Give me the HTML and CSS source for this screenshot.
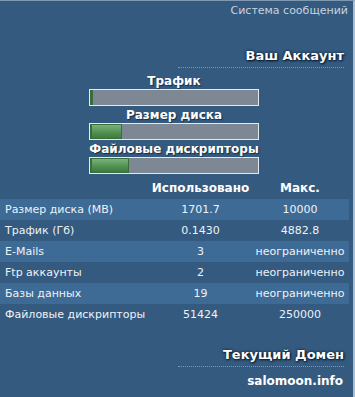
FILE: index.html
```html
<!DOCTYPE html>
<html lang="ru">
<head>
  <meta charset="UTF-8">
  <meta name="viewport" content="width=device-width, initial-scale=1.0">
  <title>Ваш Аккаунт</title>
  <link rel="stylesheet" href="styles.css">
</head>
<body>
  <div class="panel">
    <div class="topbar">
      <a href="#" class="top-link">Система сообщений</a>
    </div>

    <div class="section-title title-account">Ваш Аккаунт</div>

    <div class="meters">
      <div class="meter">
        <div class="meter-label">Трафик</div>
        <div class="bar"><div class="fill" style="width: 0px;"></div></div>
      </div>
      <div class="meter">
        <div class="meter-label">Размер диска</div>
        <div class="bar"><div class="fill" style="width: 29px;"></div></div>
      </div>
      <div class="meter">
        <div class="meter-label">Файловые дискрипторы</div>
        <div class="bar"><div class="fill" style="width: 36px;"></div></div>
      </div>
    </div>

    <table class="stats">
      <tr class="head">
        <th></th>
        <th>Использовано</th>
        <th>Макс.</th>
      </tr>
      <tr class="light">
        <td>Размер диска (MB)</td>
        <td>1701.7</td>
        <td>10000</td>
      </tr>
      <tr>
        <td>Трафик (Гб)</td>
        <td>0.1430</td>
        <td>4882.8</td>
      </tr>
      <tr class="light">
        <td>E-Mails</td>
        <td>3</td>
        <td>неограниченно</td>
      </tr>
      <tr>
        <td>Ftp аккаунты</td>
        <td>2</td>
        <td>неограниченно</td>
      </tr>
      <tr class="light">
        <td>Базы данных</td>
        <td>19</td>
        <td>неограниченно</td>
      </tr>
      <tr>
        <td>Файловые дискрипторы</td>
        <td>51424</td>
        <td>250000</td>
      </tr>
    </table>

    <div class="section-title title-domain">Текущий Домен</div>
    <div class="domain">salomoon.info</div>
  </div>
</body>
</html>
```

FILE: styles.css
```css
body {
  margin: 0;
  padding: 0;
  background-color: #345a80;
  font-family: "DejaVu Sans", Verdana, sans-serif;
  font-size: 11px;
  color: #fff;
}
.panel {
  width: 353px;
  height: 396px;
  background-color: #345a80;
  border-top: 1px solid #7f97af;
  border-right: 2px solid #aebdcc;
}
.topbar {
  text-align: right;
  padding: 3px 5px 0 0;
  height: 17px;
}
.top-link {
  color: #c9d3dd;
  text-decoration: none;
  font-size: 11px;
}
.section-title {
  width: 166px;
  margin-left: auto;
  margin-right: 9px;
  text-align: right;
  font-weight: bold;
  font-size: 13px;
  color: #fff;
  text-shadow: 1px 1px 2px #0a1828, 0 0 3px #0a1828;
  border-bottom: 1px dotted #7f97b0;
  line-height: 16px;
  padding-bottom: 3px;
}
.title-account {
  margin-top: 27px;
}
.meters {
  margin-top: 5px;
}
.meter {
  width: 170px;
  margin-left: 89px;
}
.meter-label {
  text-align: center;
  font-weight: bold;
  font-size: 12px;
  line-height: 16px;
  text-shadow: 1px 1px 1px #1a2e44;
}
.bar {
  height: 15px;
  border: 1px solid #e4e9ee;
  background-color: #7e8894;
  margin-bottom: 1px;
}
.fill {
  height: 13px;
  border: 1px solid #3b6d3b;
  border-left-width: 2px;
  background: linear-gradient(to bottom, #7bb27b, #4f8f4f 60%, #3f7a3f);
}
.stats {
  width: 349px;
  border-collapse: collapse;
  margin-top: 3px;
}
.stats th {
  font-weight: bold;
  font-size: 12px;
  height: 22px;
  text-align: center;
  padding: 0;
}
.stats td {
  height: 21px;
  padding: 0;
  text-align: center;
  color: #eef2f6;
}
.stats td:first-child {
  text-align: left;
  padding-left: 5px;
  width: 145px;
}
.stats td:nth-child(2) {
  width: 101px;
}
.stats .light td {
  background-color: #3e6a96;
}
.title-domain {
  margin-top: 22px;
}
.domain {
  text-align: right;
  font-weight: bold;
  font-size: 12px;
  padding: 7px 10px 0 0;
  color: #fff;
}
```
